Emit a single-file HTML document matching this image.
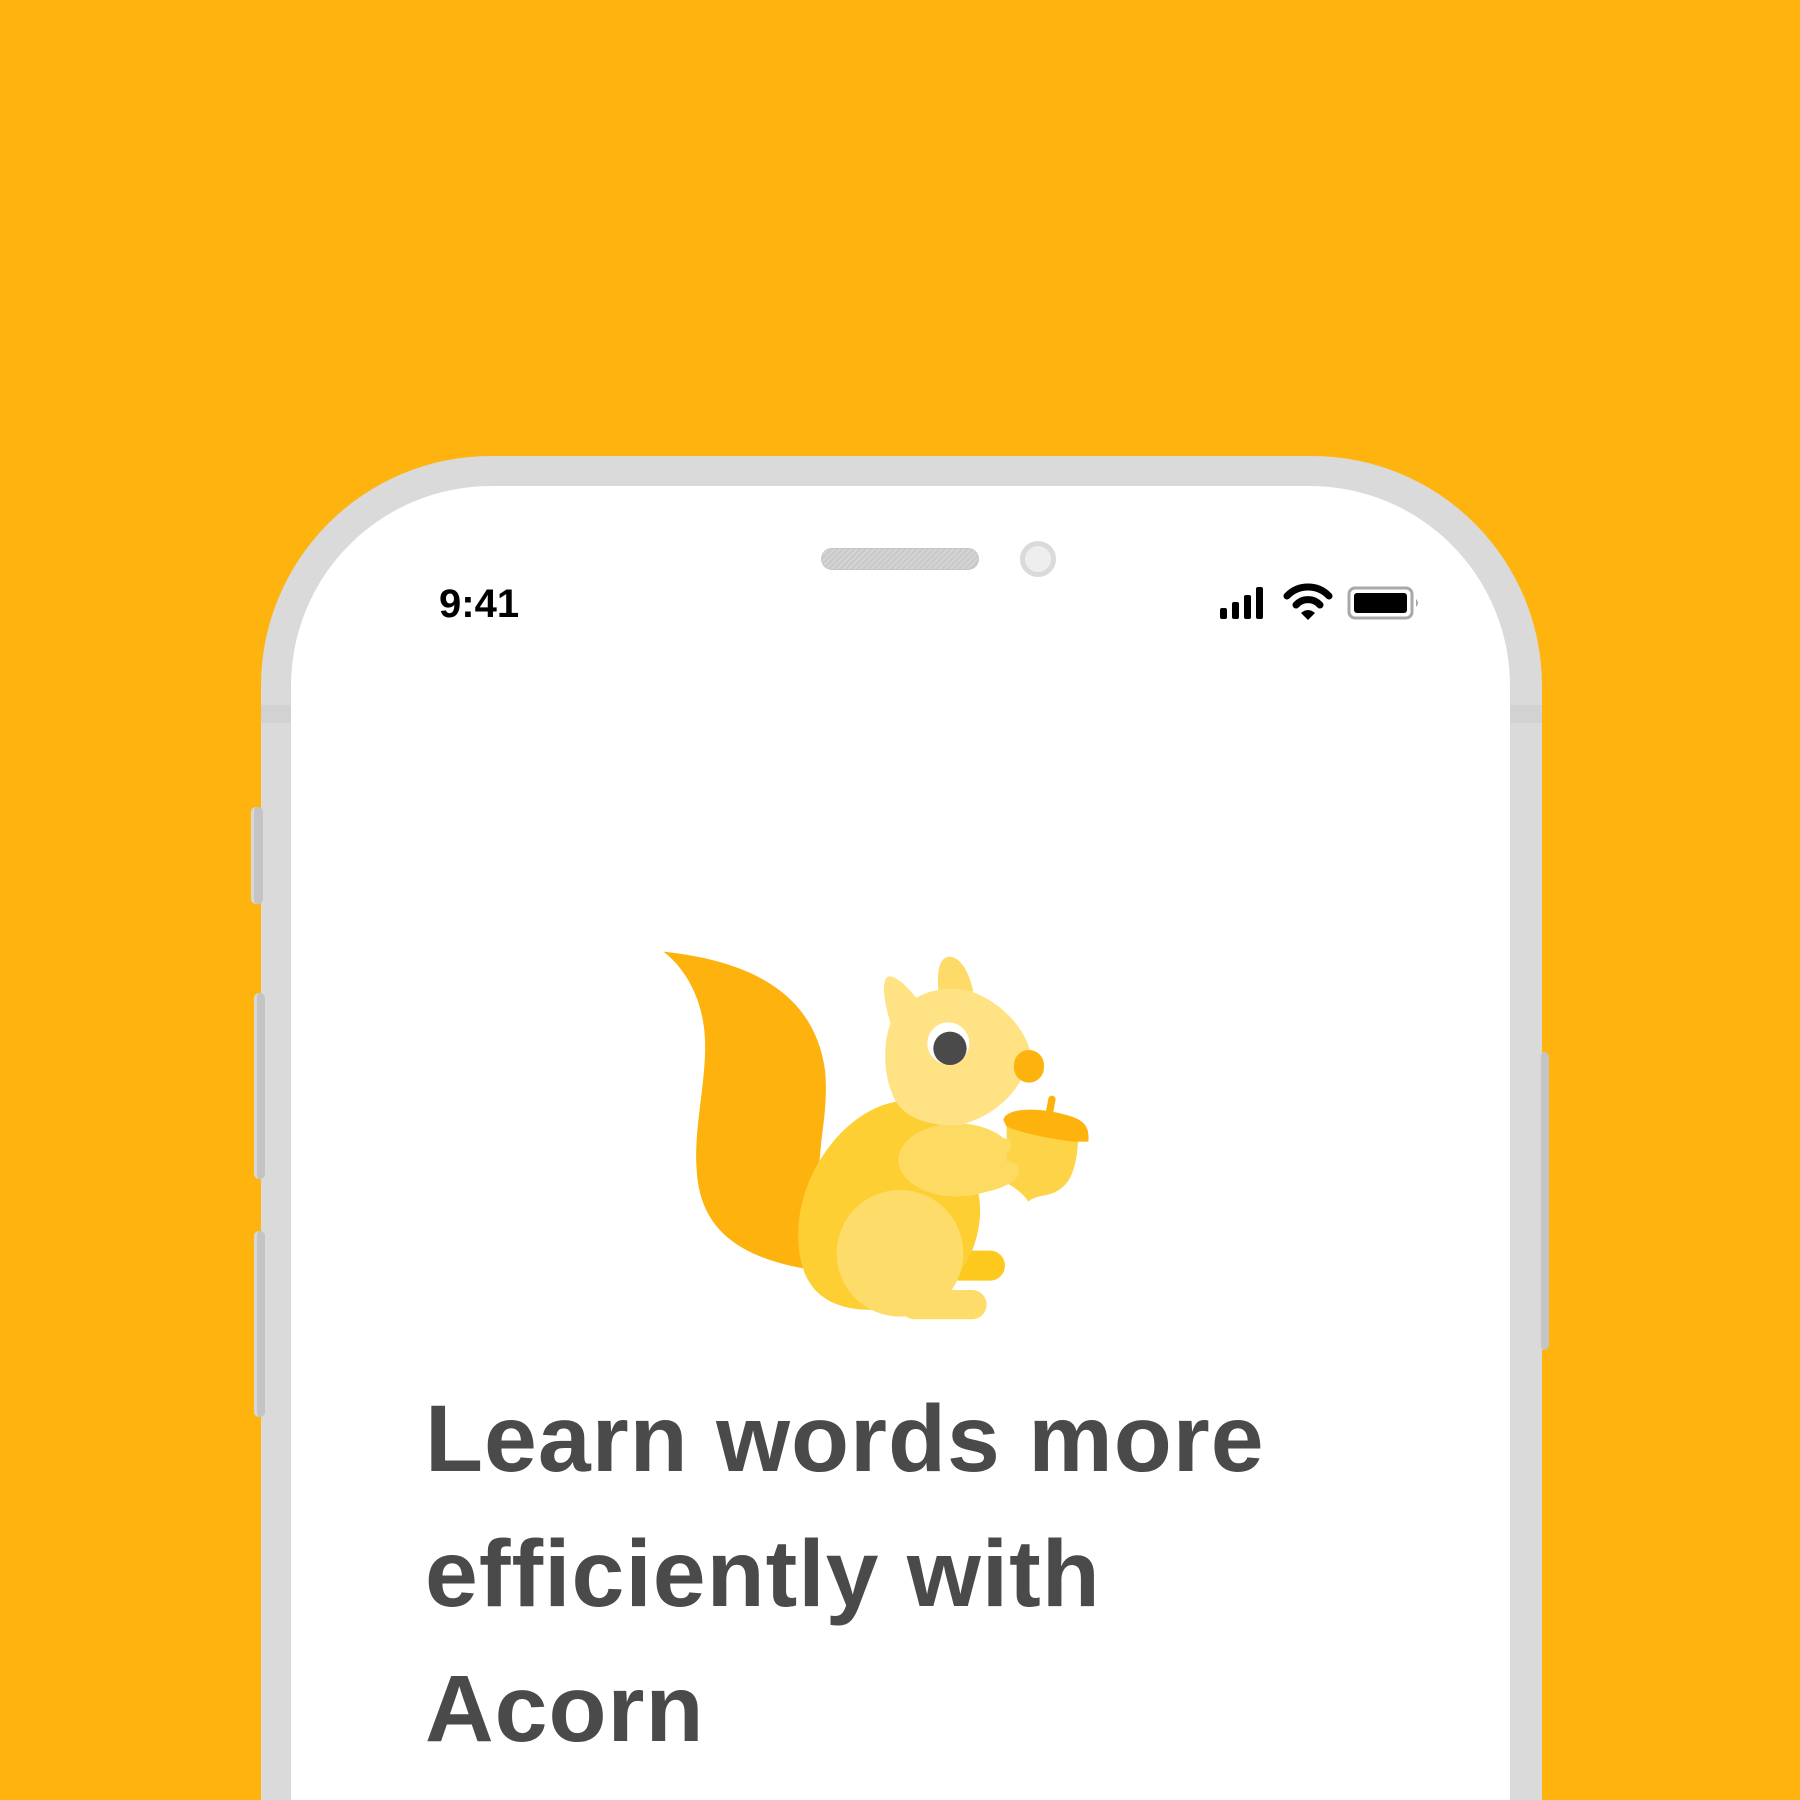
<!DOCTYPE html>
<html><head><meta charset="utf-8">
<style>
html,body{margin:0;padding:0;width:1800px;height:1800px;overflow:hidden}
#w{width:1800px;height:1800px;background:#FFB30F;position:relative;overflow:hidden;font-family:"Liberation Sans",sans-serif}
.phone{position:absolute;left:261px;top:456px;width:1281px;height:1344px;background:#dadada;border-radius:230px 230px 0 0}
.band{position:absolute;left:261px;top:705px;width:1281px;height:18px;background:#d2d2d2}
.screen{position:absolute;left:291px;top:486px;width:1219px;height:1314px;background:#fff;border-radius:200px 200px 0 0}
.btn{position:absolute;background:#c4c4c4;border-radius:5px;border-left:3px solid #d8d8d8}
.speaker{position:absolute;left:821px;top:548px;width:158px;height:22px;border-radius:11px;background:repeating-linear-gradient(135deg,#d4d4d4 0 2px,#c9c9c9 2px 4px);border:1px solid #c6c6c6;box-sizing:border-box}
.cam{position:absolute;left:1020px;top:541px;width:36px;height:36px;border-radius:50%;background:#eee;border:5px solid #dadada;box-sizing:border-box}
.time{position:absolute;left:439px;top:582px;font-size:40px;font-weight:bold;color:#000;letter-spacing:0}
.title{position:absolute;left:425px;top:1372px;font-size:95px;line-height:135px;font-weight:bold;color:#4a4a4a;letter-spacing:1px;white-space:nowrap}
</style></head><body><div id="w">
<div class="phone"></div>
<div class="band"></div>
<div class="btn" style="left:251px;top:807px;width:9px;height:97px"></div>
<div class="btn" style="left:254px;top:993px;width:8px;height:186px"></div>
<div class="btn" style="left:254px;top:1231px;width:8px;height:186px"></div>
<div class="btn" style="left:1538px;top:1052px;width:8px;height:298px"></div>
<div class="screen"></div>
<div class="speaker"></div>
<div class="cam"></div>
<div class="time">9:41</div>
<svg style="position:absolute;left:1215px;top:582px" width="210" height="40" viewBox="0 0 210 40">
 <rect x="5" y="26" width="7" height="11" rx="2"/>
 <rect x="17" y="20" width="7" height="17" rx="2"/>
 <rect x="29" y="13" width="7" height="24" rx="2"/>
 <rect x="41" y="5" width="7" height="32" rx="2"/>
 <path d="M72 14 A29 29 0 0 1 114 14" stroke="#000" stroke-width="7" fill="none" stroke-linecap="round"/>
 <path d="M81 23 A16 16 0 0 1 105 23" stroke="#000" stroke-width="7" fill="none" stroke-linecap="round"/>
 <path d="M86 31 L93 38 L100 31 Q93 25 86 31Z"/>
 <rect x="134" y="6" width="63" height="30" rx="6" fill="none" stroke="#a8a8a8" stroke-width="3"/>
 <rect x="139" y="11" width="53" height="20" rx="3"/>
 <path d="M201 17 Q205 21 201 25Z" fill="#a8a8a8"/>
</svg>
<svg style="position:absolute;left:0;top:0" width="1800" height="1800">
<g transform="translate(640,930) scale(0.3333)">
 <path d="M70,65 C300,90 520,170 555,420 C565,520 545,600 540,680 L490,1015 C300,980 180,900 170,720 C160,600 200,450 195,330 C190,200 130,110 70,65 Z" fill="#FDB20E"/>
 <rect x="880" y="962" width="215" height="90" rx="45" fill="#FDC91F"/>
 <path d="M770,515 C620,540 480,720 475,900 C470,1080 560,1140 700,1140 L800,1140 C920,1100 1010,1000 1020,860 C1030,700 900,540 770,515 Z" fill="#FDCF33"/>
 <circle cx="780" cy="970" r="190" fill="#FEDC69"/>
 <rect x="780" y="1080" width="260" height="88" rx="44" fill="#FEDC69"/>
 <ellipse cx="950" cy="690" rx="175" ry="110" fill="#FDDA62"/>
 <path d="M755,290 C735,230 720,150 745,140 C770,135 810,180 830,205 Z" fill="#FEE283"/>
 <path d="M895,180 C890,120 900,80 930,80 C970,85 990,140 1000,185 Z" fill="#FEDB68"/>
 <path d="M760,260 C820,190 900,165 980,180 C1080,210 1150,290 1170,360 C1160,480 1060,560 960,585 C880,590 790,570 760,500 C725,420 730,320 760,260 Z" fill="#FEE283"/>
 <circle cx="925" cy="340" r="63" fill="#fff"/>
 <circle cx="930" cy="355" r="50" fill="#4a4a4a"/>
 <rect x="1122" y="360" width="90" height="98" rx="45" fill="#FDB20E"/>
 <path d="M1100,590 L1315,625 C1310,720 1290,780 1220,795 C1190,800 1175,805 1165,815 C1150,790 1120,770 1100,760 Z" fill="#FDD448"/>
 <path d="M1000,630 L1100,625 C1125,632 1118,682 1050,700 C1010,700 995,660 1000,630 Z" fill="#FDDA62"/>
 <path d="M900,700 L1110,695 C1150,700 1145,750 1100,765 C1050,792 950,800 900,790 Z" fill="#FDDA62"/>
 <path d="M1090,570 C1100,530 1200,535 1260,550 C1330,565 1350,585 1345,635 L1300,635 C1220,625 1150,610 1100,590 Z" fill="#FDB20E"/>
 <line x1="1236" y1="508" x2="1229" y2="545" stroke="#FDB20E" stroke-width="22" stroke-linecap="round"/>
</g>
</svg>
<div class="title">Learn words more<br>efficiently with<br>Acorn</div>
</div></body></html>
